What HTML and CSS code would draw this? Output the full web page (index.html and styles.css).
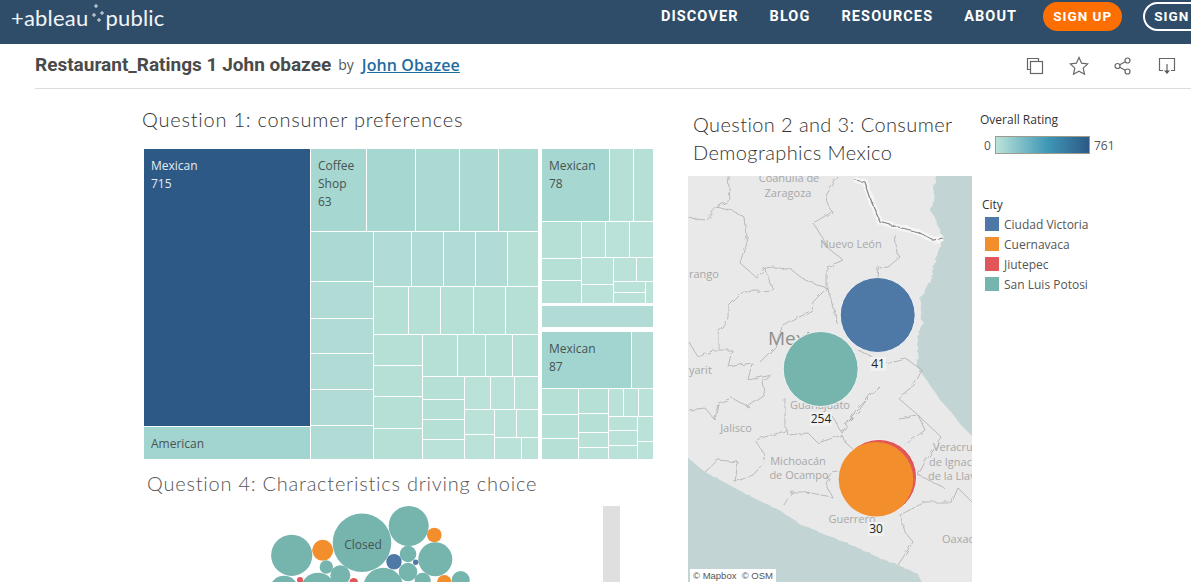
FILE: index.html
```html
<!DOCTYPE html>
<html lang="en">
<head>
    <meta charset="UTF-8">
    <meta name="viewport" content="width=device-width, initial-scale=1.0">
    <title>Restaurant_Ratings 1 John obazee</title>
    <link rel="stylesheet" href="styles.css">
</head>
<body>

    <div class="top-nav">
        <div class="logo">
            <span>+ableau</span>
            <svg class="logo-spark" width="15" height="26" viewBox="0 0 15 26">
                <path d="M6 0v4M4 2h4M4 9v4M2 11h4M12 7v4M10 9h4M9 14v4M7 16h4"/>
            </svg>
            <span>public</span>
        </div>
        <div class="nav-links">
            <a class="nav-link">DISCOVER</a>
            <a class="nav-link">BLOG</a>
            <a class="nav-link">RESOURCES</a>
            <a class="nav-link">ABOUT</a>
            <a class="btn-signup">SIGN UP</a>
            <a class="btn-signin">SIGN IN</a>
        </div>
    </div>

    <div class="title-bar">
        <h1>Restaurant_Ratings 1 John obazee</h1>
        <span class="by">by</span>
        <a class="author">John Obazee</a>
        <div class="tools">
            <svg width="20" height="20" viewBox="0 0 20 20">
                <path d="M5.500 13.500H2.500V2.500H13.500V5.500"/>
                <rect x="5.500" y="5.500" width="12" height="12"/>
            </svg>
            <svg width="20" height="20" viewBox="0 0 20 20">
                <path d="M10 1.500l2.600 5.700 6.200.7-4.600 4.200 1.300 6.100L10 15.200l-5.500 3 1.300-6.100L1.200 7.900l6.200-.7z"/>
            </svg>
            <svg width="20" height="20" viewBox="0 0 20 20">
                <circle cx="14.500" cy="4.500" r="2.500"/>
                <circle cx="4.500" cy="10" r="2.500"/>
                <circle cx="14.500" cy="15.500" r="2.500"/>
                <path d="M6.700 8.800l5.600-3.100M6.700 11.200l5.600 3.100"/>
            </svg>
            <svg width="20" height="20" viewBox="0 0 20 20">
                <path d="M6 14.500H2.500V2.500H17.500V14.500H14M10 8v8"/>
                <path class="solid" d="M7 14.500h6l-3 3.500z"/>
            </svg>
        </div>
    </div>

    <div class="dashboard">
        <div class="col-left">
            <h2 class="viz-title title-q1">Question 1: consumer preferences</h2>
            <svg class="treemap" width="510" height="311" viewBox="144 149 510 311">
                <rect class="dark" x="144" y="149" width="166" height="277"/>
                <rect class="t0" x="144" y="427" width="166" height="32"/>

                <rect class="t1" x="311" y="149" width="55" height="82"/>
                <rect class="t1" x="367" y="149" width="48" height="82"/>
                <rect class="t2" x="416" y="149" width="43" height="82"/>
                <rect class="t2" x="460" y="149" width="38" height="82"/>
                <rect class="t2" x="499" y="149" width="39" height="82"/>

                <rect class="t2" x="311" y="232" width="62" height="49"/>
                <rect class="t3" x="311" y="282" width="62" height="36"/>
                <rect class="t3" x="311" y="319" width="62" height="34"/>
                <rect class="t3" x="311" y="354" width="62" height="35"/>
                <rect class="t3" x="311" y="390" width="62" height="35"/>
                <rect class="t3" x="311" y="426" width="62" height="33"/>

                <rect class="t3" x="374" y="232" width="37" height="54"/>
                <rect class="t3" x="412" y="232" width="31" height="54"/>
                <rect class="t3" x="444" y="232" width="31" height="54"/>
                <rect class="t3" x="476" y="232" width="31" height="54"/>
                <rect class="t4" x="508" y="232" width="30" height="54"/>

                <rect class="t4" x="374" y="287" width="34" height="47"/>
                <rect class="t4" x="409" y="287" width="31" height="47"/>
                <rect class="t4" x="441" y="287" width="32" height="47"/>
                <rect class="t4" x="474" y="287" width="31" height="47"/>
                <rect class="t4" x="506" y="287" width="32" height="47"/>

                <rect class="t4" x="374" y="335" width="48" height="30"/>
                <rect class="t4" x="374" y="366" width="48" height="30"/>
                <rect class="t4" x="374" y="397" width="48" height="31"/>
                <rect class="t4" x="374" y="429" width="48" height="30"/>

                <rect class="t4" x="423" y="335" width="34" height="41"/>
                <rect class="t4" x="458" y="335" width="27" height="41"/>
                <rect class="t4" x="486" y="335" width="26" height="41"/>
                <rect class="t4" x="513" y="335" width="25" height="41"/>

                <rect class="t4" x="423" y="377" width="41" height="22"/>
                <rect class="t4" x="423" y="400" width="41" height="19"/>
                <rect class="t4" x="423" y="420" width="41" height="19"/>
                <rect class="t5" x="423" y="440" width="41" height="19"/>

                <rect class="t5" x="465" y="377" width="25" height="32"/>
                <rect class="t5" x="491" y="377" width="23" height="32"/>
                <rect class="t5" x="515" y="377" width="23" height="32"/>
                <rect class="t5" x="465" y="410" width="29" height="24"/>
                <rect class="t5" x="465" y="435" width="29" height="24"/>
                <rect class="t5" x="495" y="410" width="21" height="27"/>
                <rect class="t5" x="517" y="410" width="21" height="27"/>
                <rect class="t5" x="495" y="438" width="26" height="21"/>
                <rect class="t5" x="522" y="438" width="16" height="21"/>

                <rect class="t1" x="542" y="149" width="67" height="72"/>
                <rect class="t4" x="610" y="149" width="23" height="72"/>
                <rect class="t4" x="634" y="149" width="19" height="72"/>
                <rect class="t4" x="542" y="222" width="39" height="36"/>
                <rect class="t4" x="542" y="259" width="39" height="21"/>
                <rect class="t4" x="542" y="281" width="39" height="22"/>
                <rect class="t5" x="582" y="222" width="23" height="35"/>
                <rect class="t5" x="606" y="222" width="23" height="35"/>
                <rect class="t5" x="630" y="222" width="23" height="35"/>
                <rect class="t5" x="582" y="258" width="31" height="26"/>
                <rect class="t5" x="582" y="285" width="31" height="18"/>
                <rect class="t5" x="614" y="258" width="22" height="23"/>
                <rect class="t5" x="637" y="258" width="16" height="23"/>
                <rect class="t5" x="614" y="282" width="31" height="10"/>
                <rect class="t5" x="614" y="293" width="31" height="10"/>
                <rect class="t5" x="646" y="282" width="7" height="21"/>

                <rect class="t3" x="542" y="306" width="111" height="21"/>

                <rect class="t0" x="542" y="332" width="89" height="56"/>
                <rect class="t3" x="632" y="332" width="21" height="56"/>
                <rect class="t4" x="542" y="389" width="36" height="25"/>
                <rect class="t4" x="542" y="415" width="36" height="23"/>
                <rect class="t4" x="542" y="439" width="36" height="20"/>
                <rect class="t4" x="579" y="389" width="29" height="24"/>
                <rect class="t4" x="579" y="414" width="29" height="18"/>
                <rect class="t5" x="579" y="433" width="29" height="14"/>
                <rect class="t5" x="579" y="448" width="29" height="11"/>
                <rect class="t5" x="609" y="389" width="14" height="27"/>
                <rect class="t5" x="624" y="389" width="14" height="27"/>
                <rect class="t5" x="639" y="389" width="14" height="27"/>
                <rect class="t5" x="609" y="417" width="28" height="13"/>
                <rect class="t5" x="609" y="431" width="28" height="14"/>
                <rect class="t5" x="609" y="446" width="28" height="13"/>
                <rect class="t5" x="638" y="417" width="15" height="24"/>
                <rect class="t5" x="638" y="442" width="15" height="17"/>

                <text class="label-light" x="151" y="170">Mexican</text>
                <text class="label-light" x="151" y="188">715</text>
                <text class="label" x="151" y="448">American</text>
                <text class="label" x="318" y="170">Coffee</text>
                <text class="label" x="318" y="188">Shop</text>
                <text class="label" x="318" y="206">63</text>
                <text class="label" x="549" y="170">Mexican</text>
                <text class="label" x="549" y="188">78</text>
                <text class="label" x="549" y="353">Mexican</text>
                <text class="label" x="549" y="371">87</text>
            </svg>
            <h2 class="viz-title title-q4">Question 4: Characteristics driving choice</h2>
            <div class="bubble-row">
                <svg class="bubbles" width="340" height="76" viewBox="250 506 340 76">
                    <circle class="teal" cx="362" cy="542.700" r="29.300"/>
                    <circle class="teal" cx="408.700" cy="526" r="20"/>
                    <circle class="teal" cx="291.700" cy="555.300" r="20.600"/>
                    <circle class="orange" cx="322.700" cy="550.300" r="10.500"/>
                    <circle class="orange" cx="434.300" cy="535" r="7.300"/>
                    <circle class="teal" cx="435.300" cy="559.300" r="17"/>
                    <circle class="teal" cx="408" cy="554" r="8.300"/>
                    <circle class="blue" cx="394" cy="561.700" r="7.700"/>
                    <circle class="blue" cx="415.700" cy="562.300" r="2.700"/>
                    <circle class="teal" cx="408" cy="572" r="9.300"/>
                    <circle class="teal" cx="326.300" cy="567" r="6.700"/>
                    <circle class="teal" cx="340.300" cy="575.300" r="10"/>
                    <circle class="teal" cx="318" cy="590" r="17.300"/>
                    <circle class="teal" cx="284" cy="590" r="14.300"/>
                    <circle class="red" cx="300" cy="580" r="3"/>
                    <circle class="red" cx="353.700" cy="582.300" r="4.300"/>
                    <circle class="teal" cx="383.300" cy="587.700" r="20"/>
                    <circle class="teal" cx="422.700" cy="580.700" r="8"/>
                    <circle class="orange" cx="444.300" cy="582.300" r="7.300"/>
                    <circle class="teal" cx="460.700" cy="580" r="9"/>
                    <text class="label bubble-label" x="363" y="549">Closed</text>
                </svg>
                <div class="scroll-bar"></div>
            </div>
        </div>

        <div class="col-mid">
            <h2 class="viz-title title-q2">Question 2 and 3: Consumer<br>Demographics Mexico</h2>
            <div class="map">
                <svg width="284" height="406" viewBox="688 176 284 406">
                    <defs>
                        <filter id="rough" x="-5%" y="-5%" width="110%" height="110%">
                            <feTurbulence type="fractalNoise" baseFrequency="0.14" numOctaves="2" seed="4"/>
                            <feDisplacementMap in="SourceGraphic" scale="5"/>
                        </filter>
                    </defs>
                    <rect class="land" x="688" y="176" width="284" height="406"/>
                    <g filter="url(#rough)">
                        <path class="sea" d="M938 170H980V436L972 436L960 424L952 413L940 400L935 392L925 378L918 368L917 345L922 320L920 300L930 280L936 258L943 238L932 212L935 180Z"/>
                        <path class="sea" d="M680 458L688 458L705 472L735 488L752 497L782 512L800 524L818 532L852 545L875 556L898 565L918 574L925 590H680Z"/>
                        <path class="river-halo" d="M855 180L865 182L872 203L880 222L898 227L918 232L933 240L943 238"/>
                        <path class="river" d="M855 180L865 182L872 203L880 222L898 227L918 232L933 240L943 238"/>
                        <path class="border" d="M728 175L730 200L717 207L705 220L689 218"/>
                        <path class="border" d="M717 207L735 212L745 218L747 237L742 257L740 263L757 278L765 268L773 267L792 270L802 278L818 285L827 288"/>
                        <path class="border" d="M838 177L828 192L825 198L832 212L813 223L822 237L828 248L843 260L827 267L827 288L832 300L837 323"/>
                        <path class="border" d="M895 235L897 253L900 257L888 267L878 268L877 277"/>
                        <path class="border" d="M765 268L773 290L743 292L728 307L728 318L718 333L718 350"/>
                        <path class="border" d="M827 288L813 302L812 310L782 327L775 347L760 362"/>
                        <path class="border" d="M689 342L698 357L715 350L732 350L728 367L752 363L748 380L772 375"/>
                        <path class="border" d="M858 350L872 357L885 363L905 358L922 370L914 385L898 398L918 415"/>
                        <path class="border" d="M689 410L705 408L715 420L718 403L732 398L748 407L765 395L762 382L772 375"/>
                        <path class="border" d="M785 398L785 425L788 435L808 433L818 443L842 435L845 442L860 455"/>
                        <path class="border" d="M833 417L842 433L856 410L880 387L870 395L858 412L845 425"/>
                        <path class="border" d="M755 440L788 430"/>
                        <path class="border" d="M755 440L765 455L762 465L753 475L735 482L738 462L718 460L705 472"/>
                        <path class="border" d="M782 508L792 492L805 492L832 497L825 482L832 472L842 470"/>
                        <path class="border" d="M900 515L925 502L952 502L958 488L972 502"/>
                        <path class="border" d="M900 515L905 532L913 542L898 565"/>
                        <path class="border" d="M918 415L942 438L925 462L918 475L945 488"/>
                        <path class="border" d="M898 418L918 415L925 430L905 445"/>
                    </g>

                    <text class="place" x="789" y="182">Coahuila de</text>
                    <text class="place" x="788" y="197">Zaragoza</text>
                    <text class="place" x="851" y="248">Nuevo León</text>
                    <text class="place place-start" x="689" y="278">rango</text>
                    <text class="place place-start place-big" x="768" y="345">Mexico</text>
                    <text class="place place-start" x="689" y="374">yarit</text>
                    <text class="place" x="820" y="409">Guanajuato</text>
                    <text class="place" x="736" y="432">Jalisco</text>
                    <text class="place" x="798" y="465">Michoacán</text>
                    <text class="place" x="799" y="479">de Ocampo</text>
                    <text class="place" x="852" y="523">Guerrero</text>
                    <text class="place place-start" x="933" y="451">Veracruz</text>
                    <text class="place place-start" x="929" y="466">de Ignacio</text>
                    <text class="place place-start" x="928" y="480">de la Llave</text>
                    <text class="place place-start" x="942" y="543">Oaxaca</text>

                    <circle class="blue halo" cx="877.700" cy="315" r="37.500"/>
                    <circle class="teal halo" cx="820.700" cy="369" r="37.500"/>
                    <circle class="red halo" cx="879" cy="477" r="37.600"/>
                    <circle class="orange" cx="876" cy="479.300" r="37.300"/>

                    <rect class="num-bg" x="870" y="357" width="16" height="14"/>
                    <text class="map-num" x="878" y="368">41</text>
                    <rect class="num-bg" x="810" y="412" width="22" height="14"/>
                    <text class="map-num" x="821" y="423">254</text>
                    <rect class="num-bg" x="868" y="522" width="16" height="14"/>
                    <text class="map-num" x="876" y="533">30</text>
                </svg>
                <div class="attribution">&copy; Mapbox &nbsp;&copy; OSM</div>
            </div>
        </div>

        <div class="col-legend">
            <div class="legend-title">Overall Rating</div>
            <div class="ramp-row">
                <span class="ramp-min">0</span>
                <div class="ramp"></div>
                <span>761</span>
            </div>
            <div class="legend-title city-title">City</div>
            <div class="legend-item"><span class="swatch swatch-blue"></span>Ciudad Victoria</div>
            <div class="legend-item"><span class="swatch swatch-orange"></span>Cuernavaca</div>
            <div class="legend-item"><span class="swatch swatch-red"></span>Jiutepec</div>
            <div class="legend-item"><span class="swatch swatch-teal"></span>San Luis Potosi</div>
        </div>
    </div>

</body>
</html>
```

FILE: styles.css
```css
html, body {
    margin: 0;
    padding: 0;
    height: 582px;
    overflow: hidden;
    background-color: white;
    font-family: "Open Sans", sans-serif;
}

.top-nav {
    display: flex;
    justify-content: space-between;
    height: 44px;
    background-color: #2f4d68;
    color: white;
    overflow: hidden;
}

.logo {
    display: flex;
    align-items: center;
    height: 34px;
    margin-left: 11px;
    font-family: Lato, sans-serif;
    font-weight: 400;
    font-size: 22px;
    letter-spacing: 0.2px;
    color: #f2f5f7;
}

.logo-spark {
    margin: 0 0 0 2px;
}

.logo-spark path {
    fill: none;
    stroke: #dfe6ec;
    stroke-width: 1;
}

.nav-links {
    display: flex;
    align-items: center;
    height: 33px;
    flex-shrink: 0;
    margin-right: -29px;
    font-family: Roboto, sans-serif;
    font-weight: 700;
    font-size: 14.5px;
    letter-spacing: 1.1px;
}

.nav-link {
    margin-right: 31px;
}

.nav-link:nth-child(4) {
    margin-right: 26px;
}

.btn-signup {
    padding: 0 10px;
    height: 29px;
    line-height: 29px;
    margin-right: 21px;
    font-size: 13.5px;
    letter-spacing: 1px;
    background-color: #fd6f00;
    border-radius: 15px;
}

.btn-signin {
    padding: 0 9px;
    height: 25px;
    line-height: 25px;
    font-size: 13.5px;
    letter-spacing: 1px;
    border: 2px solid white;
    border-radius: 15px;
    white-space: nowrap;
}

.title-bar {
    display: flex;
    align-items: center;
    box-sizing: border-box;
    height: 45px;
    padding-bottom: 3px;
    margin-left: 35px;
    border-bottom: 1px solid #dcdcdc;
}

.title-bar h1 {
    margin: 0;
    font-family: Roboto, sans-serif;
    font-size: 19px;
    font-weight: 700;
    color: #4a4a4a;
}

.by {
    margin-left: 7px;
    font-family: "Open Sans", sans-serif;
    font-size: 14px;
    color: #555;
}

.author {
    margin-left: 8px;
    font-family: "Open Sans", sans-serif;
    font-size: 16px;
    font-weight: 600;
    letter-spacing: 0.1px;
    color: #1f6c9f;
    text-decoration: underline;
}

.tools {
    display: flex;
    gap: 24px;
    margin-left: auto;
    margin-right: 14px;
    padding-top: 2px;
}

.tools svg {
    fill: none;
    stroke: #666;
    stroke-width: 1.2;
}

.tools .solid {
    fill: #555;
    stroke: none;
}

.dashboard {
    display: flex;
    height: 493px;
    overflow: hidden;
}

.viz-title {
    margin: 0;
    font-family: Lato, sans-serif;
    font-weight: 300;
    font-size: 20px;
    letter-spacing: 0.77px;
    color: #333;
}

.col-left {
    width: 546px;
    margin-left: 142px;
}

.title-q1 {
    height: 60px;
    line-height: 60px;
}

.treemap {
    display: block;
    margin-left: 2px;
}

.treemap .dark { fill: #2c5985; }
.treemap .t0 { fill: #a3d5d0; }
.treemap .t1 { fill: #a6d7d1; }
.treemap .t2 { fill: #abdad3; }
.treemap .t3 { fill: #b0dcd5; }
.treemap .t4 { fill: #b6e0d6; }
.treemap .t5 { fill: #bae2d8; }

.label, .label-light {
    font-family: "Open Sans", sans-serif;
    font-size: 12px;
    fill: #465454;
}

.label-light {
    fill: #e6ecf2;
}

.title-q4 {
    height: 46px;
    line-height: 46px;
    margin-left: 5px;
    color: #555;
}

.bubble-row {
    display: flex;
    height: 76px;
}

.bubbles {
    display: block;
    margin-left: 108px;
    flex-shrink: 0;
    width: 340px;
}

.bubble-label {
    text-anchor: middle;
}

.scroll-bar {
    width: 17px;
    margin-left: 13px;
    height: 76px;
    background-color: #dfdfdf;
}

.teal { fill: #76b5ae; }
.blue { fill: #4e79a7; }
.orange { fill: #f28e2b; }
.red { fill: #e15759; }

.col-mid {
    width: 284px;
}

.title-q2 {
    margin-left: 5px;
    height: 87px;
    padding-top: 21px;
    box-sizing: border-box;
    line-height: 28px;
    letter-spacing: 0.4px;
}

.map {
    position: relative;
    height: 406px;
    overflow: hidden;
}

.map svg {
    display: block;
}

.land { fill: #e9e9e9; }
.sea { fill: #c2d4d4; }

.border {
    fill: none;
    stroke: #a3a3a3;
    stroke-width: 0.7;
}

.river-halo {
    fill: none;
    stroke: #f6f6f6;
    stroke-width: 6;
}

.river {
    fill: none;
    stroke: #858585;
    stroke-width: 1.2;
}

.place {
    font-family: "Open Sans", sans-serif;
    font-size: 11px;
    fill: #a8a8a8;
    text-anchor: middle;
}

.place-start {
    text-anchor: start;
}

.place-big {
    font-size: 19px;
    fill: #8f8f8f;
}

.halo {
    stroke: #f2f2f2;
    stroke-width: 1;
}

.num-bg {
    fill: #f1f1f1;
}

.map-num {
    font-family: "Open Sans", sans-serif;
    font-size: 12px;
    fill: #222;
    text-anchor: middle;
}

.attribution {
    position: absolute;
    left: 2px;
    bottom: 0;
    padding: 0 3px;
    height: 13px;
    line-height: 13px;
    background-color: white;
    font-family: "Liberation Sans", sans-serif;
    font-size: 9.5px;
    color: #555;
}

.col-legend {
    margin-left: 8px;
    padding-top: 23px;
    font-size: 12px;
    color: #555;
}

.legend-title {
    height: 16px;
    line-height: 16px;
    font-size: 12px;
    color: #333;
}

.ramp-row {
    display: flex;
    align-items: center;
    height: 18px;
    margin-top: 8px;
    gap: 4px;
}

.ramp-min {
    margin-left: 4px;
    width: 7px;
}

.ramp {
    box-sizing: border-box;
    width: 95px;
    height: 18px;
    border: 1px solid #9d9a8e;
    background: linear-gradient(to right, #bbe3d8, #3f98b6 55%, #2c5985);
}

.city-title {
    margin-top: 43px;
    margin-left: 2px;
    margin-bottom: 1px;
}

.legend-item {
    display: flex;
    align-items: center;
    height: 20px;
    margin-left: 5px;
}

.swatch {
    width: 14px;
    height: 14px;
    margin-right: 5px;
}

.swatch-blue { background-color: #4e79a7; }
.swatch-orange { background-color: #f28e2b; }
.swatch-red { background-color: #e15759; }
.swatch-teal { background-color: #76b5ae; }
```
